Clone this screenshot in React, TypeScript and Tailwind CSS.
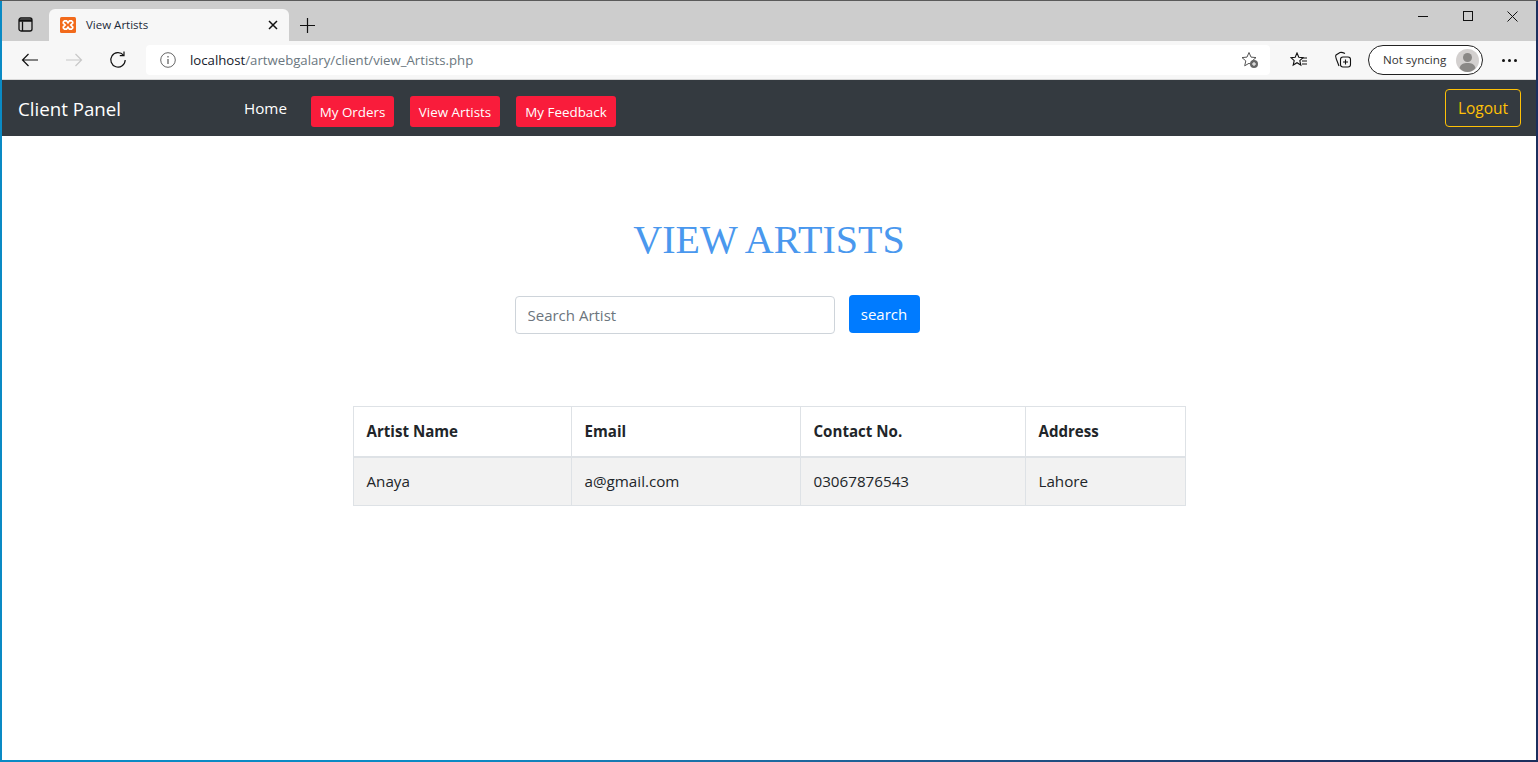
const uiFont = "font-['Open_Sans','Noto_Sans',sans-serif]";

const navButtons = [
  { label: "My Orders", width: "w-[83px]" },
  { label: "View Artists", width: "w-[90px]" },
  { label: "My Feedback", width: "w-[100px]" },
];

function BrowserChrome() {
  return (
    <div className="shrink-0">
      {/* tab strip */}
      <div className="flex h-[40px] items-end bg-[#cdcdcd]">
        <div className="flex h-[32px] w-[47px] items-start justify-center pt-[8px]">
          <svg width="15" height="15" viewBox="0 0 15 15" fill="none" stroke="#111" strokeWidth="1.300">
            <rect x="1" y="1" width="13" height="13" rx="2" />
            <path d="M1 3.500h13" strokeWidth="2.500" />
            <path d="M4.500 4.500V14" />
          </svg>
        </div>
        <div className="flex h-[32px] w-[240px] items-center rounded-t-[6px] bg-[#f7f7f7] pb-px pl-[11px] pr-[11px]">
          <svg width="16" height="16" viewBox="0 0 16 16" className="shrink-0">
            <rect width="16" height="16" rx="1.500" fill="#f26a1b" />
            <path d="M4.500 3.800h2L8 5.800l1.500-2h2l1.200 1.200v1.200L10.800 8l1.900 1.800V11l-1.200 1.200h-2L8 10.200l-1.500 2h-2L3.300 11V9.800L5.200 8 3.300 6.200V5z" fill="none" stroke="#fff" strokeWidth="1.700" />
          </svg>
          <span className={`ml-[10px] flex-1 text-[11.500px] text-[#1c2a3a] ${uiFont}`}>View Artists</span>
          <svg width="10" height="10" viewBox="0 0 10 10" stroke="#111" strokeWidth="1.500">
            <path d="M1 1l8 8M9 1l-8 8" />
          </svg>
        </div>
        <div className="flex h-[31px] w-[36px] items-center justify-center">
          <svg width="15" height="15" viewBox="0 0 15 15" stroke="#111" strokeWidth="1.200">
            <path d="M7.500 0v15M0 7.500h15" />
          </svg>
        </div>
        <div className="flex-1" />
        <div className="flex h-[40px] items-start pr-[1px] pt-[8px]">
          <div className="flex h-[14px] w-[45px] items-center justify-center">
            <div className="h-px w-[10px] bg-[#111]" />
          </div>
          <div className="flex h-[14px] w-[45px] items-center justify-center">
            <div className="size-[10px] border border-[#111]" />
          </div>
          <div className="flex h-[14px] w-[45px] items-center justify-center">
            <svg width="11" height="11" viewBox="0 0 11 11" stroke="#111">
              <path d="M0.500 0.500l10 10M10.500 0.500l-10 10" />
            </svg>
          </div>
        </div>
      </div>
      {/* address bar */}
      <div className="flex h-[39px] items-center border-b border-[#d8d8d8] bg-[#f7f7f7]">
        <div className="flex w-[144px] items-center pl-[19px]">
          <svg width="18" height="14" viewBox="0 0 18 14" fill="none" stroke="#111" strokeWidth="1.200">
            <path d="M17 7H1.500M7.500 1L1.500 7l6 6" />
          </svg>
          <svg width="18" height="14" viewBox="0 0 18 14" fill="none" stroke="#c8c8c8" strokeWidth="1.200" className="ml-[26px]">
            <path d="M1 7h15.500M10.500 1l6 6-6 6" />
          </svg>
          <svg width="18" height="18" viewBox="0 0 18 18" fill="none" stroke="#111" strokeWidth="1.200" className="ml-[26px]">
            <path d="M14.500 4.200A7.200 7.200 0 1 0 16.200 9" />
            <path d="M15 0.500v4.200h-4.200" />
          </svg>
        </div>
        <div className={`flex h-[30px] w-[1124px] items-center rounded-[4px] bg-white pl-[14px] pr-[11px] ${uiFont}`}>
          <svg width="16" height="16" viewBox="0 0 16 16" fill="none" stroke="#666" strokeWidth="1">
            <circle cx="8" cy="8" r="7.300" />
            <path d="M8 7v5M8 4v1.500" strokeWidth="1.300" />
          </svg>
          <span className="ml-[14px] flex-1 pt-[2px] text-[13.200px] text-[#6b7780]">
            <span className="text-[#15202b]">localhost</span>/artwebgalary/client/view_Artists.php
          </span>
          <svg width="18" height="18" viewBox="0 0 18 18" fill="none" stroke="#555" strokeWidth="1">
            <path d="M8 1.500l2 4.600 5 .5-3.800 3.300 1.100 4.900L8 12.300l-4.300 2.500 1.100-4.900L1 6.600l5-.5z" />
            <circle cx="13" cy="13" r="4" fill="#666" stroke="none" />
            <path d="M13 11v4M11 13h4" stroke="#fff" />
          </svg>
        </div>
        <div className="ml-[20px] flex items-center">
          <svg width="18" height="16" viewBox="0 0 18 16" fill="none" stroke="#111" strokeWidth="1.100">
            <path d="M7 1l1.800 4.300 4.200.4-3.200 2.900 1 4.400L7 10.700 3.200 13l1-4.400L1 5.700l4.200-.4z" />
            <path d="M12 6h5M12 9h5M12 12h5" />
          </svg>
          <svg width="18" height="18" viewBox="0 0 18 18" fill="none" stroke="#111" strokeWidth="1.100" className="ml-[26px]">
            <path d="M5 15L2.500 8.500C2 7 1 5 2 4l4-2.500c1.500-.5 3 0 5 1" />
            <rect x="6.500" y="6" width="10" height="10" rx="2.500" />
            <path d="M11.500 8.500v5M9 11h5" />
          </svg>
          <div className={`ml-[16px] flex h-[30px] w-[115px] items-center rounded-full border border-[#222] bg-white pl-[14px] pr-[3px] ${uiFont}`}>
            <span className="flex-1 text-[11.600px] text-[#333]">Not syncing</span>
            <svg width="23" height="23" viewBox="0 0 23 23">
              <circle cx="11.500" cy="11.500" r="11.500" fill="#d3d0cf" />
              <circle cx="11.500" cy="8.500" r="4.500" fill="#8a8886" />
              <path d="M3.500 19c1-4 4-5 8-5s7 1 8 5c-2 2.500-5 4-8 4s-6-1.500-8-4z" fill="#8a8886" />
            </svg>
          </div>
          <div className="ml-[19px] flex items-center gap-[3px]">
            <span className="size-[3px] rounded-full bg-[#111]" />
            <span className="size-[3px] rounded-full bg-[#111]" />
            <span className="size-[3px] rounded-full bg-[#111]" />
          </div>
        </div>
      </div>
    </div>
  );
}

function Navbar() {
  return (
    <nav className={`flex h-[56px] shrink-0 items-center bg-[#343a40] pl-[16px] pr-[15px] ${uiFont}`}>
      <span className="w-[226px] pt-[2px] text-[18.700px] text-white">Client Panel</span>
      <span className="w-[67px] text-[15.200px] text-white">Home</span>
      <div className="flex gap-[16px] pt-[7px]">
        {navButtons.map((b) => (
          <span
            key={b.label}
            className={`flex h-[31px] items-center justify-center rounded-[3px] bg-[#f91c3b] pt-px text-[13.400px] text-white ${b.width}`}
          >
            {b.label}
          </span>
        ))}
      </div>
      <div className="flex-1" />
      <span className="flex h-[38px] w-[76px] items-center justify-center rounded-[4px] border border-[#ffc107] pt-[2px] text-[15.500px] text-[#ffc107]">
        Logout
      </span>
    </nav>
  );
}

const cellWidths = ["w-[218px]", "w-[229px]", "w-[225px]", "w-[160px]"];
const head = ["Artist Name", "Email", "Contact No.", "Address"];
const row = ["Anaya", "a@gmail.com", "03067876543", "Lahore"];

function ArtistsTable() {
  return (
    <table className={`mt-[72px] border-collapse text-[#212529] ${uiFont}`}>
      <thead>
        <tr>
          {head.map((h, i) => (
            <th
              key={h}
              className={`h-[50px] border border-b-2 border-[#dee2e6] pl-[13px] pr-[12px] text-left text-[15.100px] font-bold ${cellWidths[i]}`}
            >
              {h}
            </th>
          ))}
        </tr>
      </thead>
      <tbody>
        <tr className="bg-[#f2f2f2]">
          {row.map((c) => (
            <td key={c} className="h-[49px] border border-[#dee2e6] pl-[13px] pr-[12px] text-[15.200px]">
              {c}
            </td>
          ))}
        </tr>
      </tbody>
    </table>
  );
}

export default function App() {
  return (
    <div className="h-[762px] w-[1538px] overflow-hidden border-t border-t-[#5a5a5a] bg-linear-to-r from-[#0a8ac4] from-30% to-[#1c2f5e] to-90% pb-[2px] pl-[2px] pr-[2px]">
      <div className="flex h-full flex-col bg-white">
        <BrowserChrome />
        <Navbar />
        <main className="flex flex-col items-center pt-[76px]">
          <h1 className="font-['Liberation_Serif',serif] text-[40px] leading-[56px] text-[#4a98ee]">VIEW ARTISTS</h1>
          <div className={`mr-[104px] mt-[27px] flex items-start ${uiFont}`}>
            <input
              placeholder="Search Artist"
              className="mt-px h-[38px] w-[320px] rounded-[4px] border border-[#ced4da] bg-white px-[12px] text-[15px] placeholder:text-[#6c757d]"
            />
            <span className="ml-[14px] flex h-[38px] w-[71px] items-center justify-center rounded-[4px] bg-[#007bff] text-[15px] text-white">
              search
            </span>
          </div>
          <ArtistsTable />
        </main>
      </div>
    </div>
  );
}
